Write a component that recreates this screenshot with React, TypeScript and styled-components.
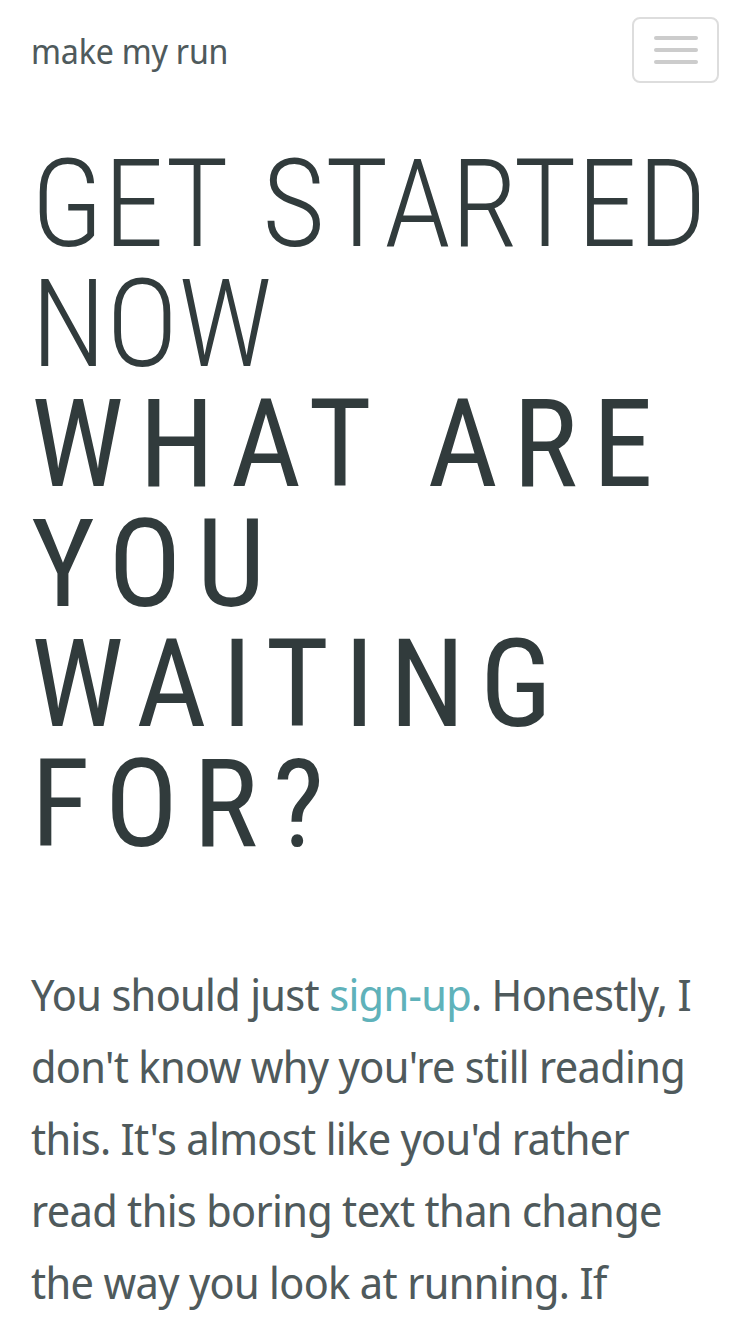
import React from "react";
import styled, { createGlobalStyle } from "styled-components";

const GlobalStyle = createGlobalStyle`
  html, body { margin: 0; padding: 0; background: #ffffff; }
  body { font-family: "Noto Sans Display", "Noto Sans", sans-serif; }
  * { box-sizing: border-box; }
`;

const Page = styled.div`
  width: 750px;
  padding: 17px 31px 0 31px;
`;

const NavBar = styled.header`
  display: flex;
  align-items: center;
  justify-content: space-between;
`;

const Brand = styled.a`
  font-family: "Noto Sans Display", "Noto Sans", sans-serif;
  font-size: 34px;
  letter-spacing: -0.2px;
  color: #4f5a5c;
  text-decoration: none;
  line-height: 1;
  margin-top: 2px;
`;

const Toggle = styled.button`
  width: 87px;
  height: 66px;
  border: 2px solid #dddddd;
  border-radius: 8px;
  background: #ffffff;
  display: flex;
  flex-direction: column;
  align-items: center;
  justify-content: center;
  gap: 8px;
  padding: 0;
`;

const Bar = styled.span`
  display: block;
  width: 44px;
  height: 4px;
  border-radius: 2px;
  background: #cccccc;
`;

const Heading = styled.h1<{ $weight: number; $spacing: number; $wordSpacing: number }>`
  margin: 0;
  font-family: "Roboto Condensed", "Noto Sans Display", sans-serif;
  font-weight: ${(p) => p.$weight};
  font-size: 122px;
  line-height: 120px;
  letter-spacing: ${(p) => p.$spacing}px;
  word-spacing: ${(p) => p.$wordSpacing}px;
  text-transform: uppercase;
  color: #313b3c;
`;

const Hero = styled.section`
  margin-top: 62px;
`;

const Lead = styled.p`
  margin: 93px 0 0 0;
  font-family: "Noto Sans Display", "Noto Sans", sans-serif;
  font-size: 44px;
  letter-spacing: -0.65px;
  line-height: 72px;
  color: #4f5a5c;
`;

const Link = styled.a`
  color: #5fb2ba;
  text-decoration: none;
`;

export default function App() {
  return (
    <>
      <GlobalStyle />
      <Page>
        <NavBar>
          <Brand href="#">make my run</Brand>
          <Toggle aria-label="Toggle navigation">
            <Bar />
            <Bar />
            <Bar />
          </Toggle>
        </NavBar>
        <Hero>
          <Heading $weight={300} $spacing={0} $wordSpacing={8}>
            Get started now
          </Heading>
          <Heading as="h2" $weight={400} $spacing={15} $wordSpacing={0}>
            What are you waiting for?
          </Heading>
          <Lead>
            You should just <Link href="#">sign-up</Link>. Honestly, I don't know why
            you're still reading this. It's almost like you'd rather read this boring
            text than change the way you look at running. If you're still here, you
            might as well sign up and get going.
          </Lead>
        </Hero>
      </Page>
    </>
  );
}
